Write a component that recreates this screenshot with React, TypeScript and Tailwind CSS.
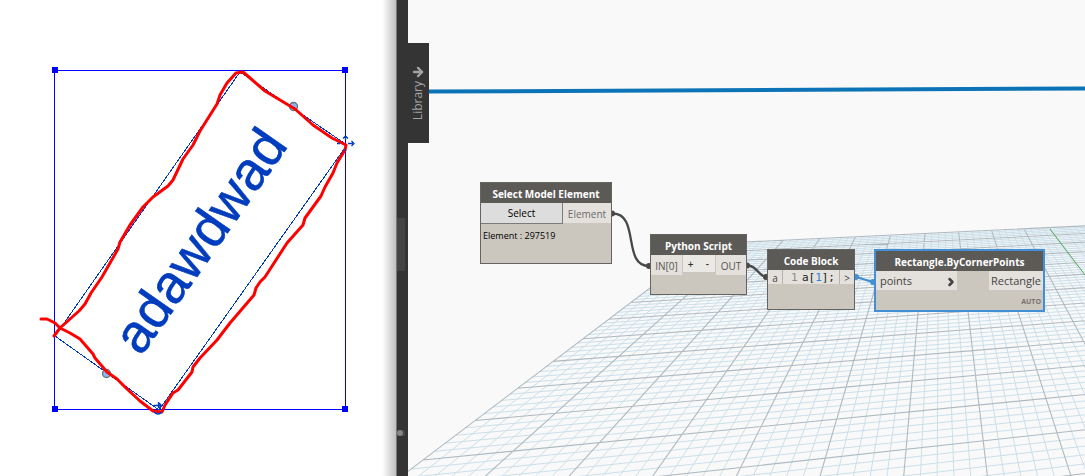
import React from 'react';
import { ArrowRight, ChevronRight } from 'lucide-react';

// Perspective projection of the ground plane: c runs across, r runs away from the viewer
function project(c: number, r: number) {
  const w = 0.02336 * c + 0.1122 * r + 1;
  const x = (102.3 * c + 105.4 * r + 423) / w - 408;
  const y = (1.6 * c + 7.7 * r + 460) / w;
  return `${x.toFixed(1)} ${y.toFixed(1)}`;
}

const MAX_COL = 16;
const MIN_ROW = -4;
const MAX_ROW = 11;

function gridPath(major: boolean) {
  const parts: string[] = [];
  for (let i = 0; i <= MAX_COL * 5; i++) {
    if ((i % 5 === 0) === major && i !== 50) {
      parts.push(`M${project(i / 5, MIN_ROW)}L${project(i / 5, MAX_ROW)}`);
    }
  }
  for (let i = MIN_ROW * 5; i <= MAX_ROW * 5; i++) {
    if ((i % 5 === 0) === major) {
      parts.push(`M${project(0, i / 5)}L${project(MAX_COL, i / 5)}`);
    }
  }
  return parts.join('');
}

const SKETCH =
  'M41 319L47 319L55 323L60 328L70 333L80 339L93 354L95 358L107 372L117 379L127 389L140 401L153 411L162 412L165 405L173 393L178 390L192 372L193 367L200 358L217 340L230 323L254 295L256 288L260 282L265 277L287 243L303 225L305 218L321 196L325 187L333 173L337 163L345 150L346 145L332 138L313 125L295 109L285 103L265 91L250 78L243 72L236 73L227 83L220 95L217 104L200 131L193 145L183 159L173 180L168 186L153 197L143 207L130 225L120 242L118 249L102 277L91 293L85 304L79 311L70 319L60 328L54 336';

function DrawingView() {
  return (
    <section className="relative w-[396px] shrink-0 overflow-hidden bg-white">
      <svg className="block" width="396" height="476" viewBox="0 0 396 476">
        <g fill="none" stroke="#0000ff" shapeRendering="crispEdges">
          <rect x="54.5" y="70.5" width="291" height="339" />
        </g>
        <path
          d="M55 336L240 72L347 145L159 410Z"
          fill="none"
          stroke="#003cbe"
          shapeRendering="crispEdges"
        />
        <g fill="#0000ff">
          <rect x="52" y="67" width="6" height="6" />
          <rect x="342" y="67" width="6" height="6" />
          <rect x="52" y="406" width="6" height="6" />
          <rect x="342" y="406" width="6" height="6" />
        </g>
        <text
          transform="translate(141 357) rotate(-55)"
          fontFamily="Liberation Sans, Arial, sans-serif"
          fontSize="54"
          fill="#003cbe"
          stroke="#003cbe"
          strokeWidth="0.6"
        >
          adawdwad
        </text>
        <g fill="#8cb8f0" stroke="#66727c" strokeWidth="1.3">
          <circle cx="293.5" cy="106.5" r="4" />
          <circle cx="106.5" cy="373.5" r="4" />
        </g>
        <path d={SKETCH} fill="none" stroke="#ff0000" strokeWidth="3" strokeLinejoin="round" strokeLinecap="round" />
        <g fill="none" stroke="#003cbe" strokeWidth="1.3">
          <path d="M348 143.5H353M351.5 141L354 143.5L351.5 146M345.5 140V136M343 138.5L345.5 136L348 138.5M337 143.5H340M345.5 149V151" />
          <path d="M154 405.5H161M158.5 402V408M159 403L161.5 405.5L159 408M154 412Q158 416 162 412" />
        </g>
      </svg>
      <div className="absolute inset-y-0 right-0 w-3.5 bg-gradient-to-r from-transparent to-black/25" />
    </section>
  );
}

function Sidebar() {
  return (
    <div className="flex w-3 shrink-0 flex-col border-l border-[#777] bg-[#343434] pt-[218px]">
      <div className="h-[53px] w-2 bg-[#444]" />
      <div className="mt-[159px] h-1.5 w-2 bg-[#444]">
        <div className="size-1.5 rounded-full bg-[#858585]" />
      </div>
    </div>
  );
}

type NodeProps = {
  title: string;
  className: string;
  children: React.ReactNode;
};

function Node({ title, className, children }: NodeProps) {
  return (
    <article className={`absolute flex flex-col bg-[#cbc6be] ${className}`}>
      <h2 className="flex h-5 shrink-0 items-center justify-center bg-[#5c5a57] pt-0.5 text-[10px] leading-4 font-bold whitespace-nowrap text-white">
        {title}
      </h2>
      {children}
    </article>
  );
}

const PORT = 'flex h-5 items-center justify-center bg-[#e4e0db] pt-0.5 text-[10px] text-[#555]';

export default function App() {
  return (
    <div className="flex min-h-screen overflow-hidden bg-[#f9f9f9] font-['Open_Sans',sans-serif]">
      <DrawingView />
      <Sidebar />

      <main className="relative min-w-0 flex-1 overflow-hidden bg-[#f9f9f9]">
        {/* Ground grid and geometry preview */}
        <svg className="absolute top-0 left-0" width="677" height="476" viewBox="0 0 677 476">
          <path d={gridPath(false)} fill="none" stroke="#cbdfea" />
          <path d={gridPath(true)} fill="none" stroke="#aebac1" strokeWidth="1.1" />
          <path d="M642 229L677 275" stroke="#4aa651" />
          <path d="M21 91.5L677 88.5" stroke="#0c74b6" strokeWidth="4" />
        </svg>

        {/* Wires */}
        <svg className="absolute top-0 left-0" width="677" height="476" viewBox="0 0 677 476" fill="none">
          <g stroke="#484848" strokeWidth="2.3">
            <path d="M205 213.5C232 214 214 266 241 266" />
            <path d="M340 265.5C350 266 350 277 359 277" />
          </g>
          <path d="M447 277C455 278 458 281 466 282" stroke="#448fd3" strokeWidth="2.3" />
          <g fill="#484848">
            <circle cx="204" cy="213.5" r="3" />
            <circle cx="241" cy="266" r="3" />
            <circle cx="339" cy="265.5" r="3" />
            <circle cx="358" cy="277" r="3" />
          </g>
          <circle cx="448" cy="277" r="3" fill="#448fd3" />
          <circle cx="465" cy="282" r="3" fill="#448fd3" />
        </svg>

        <button
          type="button"
          className="absolute top-[43px] left-0 flex h-[100px] w-[21px] flex-col items-center justify-center gap-0.5 bg-[#343434] pr-0.5 text-[12px] leading-4 text-[#a3a3a3]"
        >
          <ArrowRight size={14} strokeWidth={4} />
          <span className="rotate-180 [writing-mode:vertical-rl]">Library</span>
        </button>

        <Node title="Select Model Element" className="top-[182px] left-[72px] h-[82px] w-[132px] border border-[#666461]">
          <div className="flex">
            <button type="button" className="h-[21px] flex-1 border-r border-b border-[#7b7b7b] bg-[#dddddd] text-[10px] text-black">
              Select
            </button>
            <span className="flex h-5 w-12 items-center justify-center bg-[#e4e0db] pt-0.5 text-[10px] text-[#6c6c6c]">
              Element
            </span>
          </div>
          <p className="px-0.5 pt-1 text-[9px] leading-4 text-black">Element : 297519</p>
        </Node>

        <Node title="Python Script" className="top-[234px] left-[242px] h-[61px] w-[97px] border border-[#666461]">
          <div className="flex justify-between">
            <span className={`${PORT} w-[31px]`}>IN[0]</span>
            <button type="button" className="h-[17px] w-4 bg-[#ebe9e6] text-[10px] leading-4 font-semibold text-[#333]">
              +
            </button>
            <button type="button" className="h-[17px] w-4 bg-[#ebe9e6] text-[10px] leading-4 font-semibold text-[#333]">
              -
            </button>
            <span className={`${PORT} w-[30px]`}>OUT</span>
          </div>
        </Node>

        <Node title="Code Block" className="top-[249px] left-[359px] h-[61px] w-[88px] border border-[#666461]">
          <div className="flex h-3.5 bg-[#e4e0db] text-[10px] leading-4 text-[#444]">
            <span className="w-[15px] border-r border-[#b5b1ab] text-center">a</span>
            <code className="flex flex-1 justify-between pr-1 pl-2 font-['DejaVu_Sans_Mono',monospace] text-[11px] leading-4">
              <span className="text-[#8d8a86]">1</span>
              <span className="text-[#222]">
                a[<span className="text-[#2d7fe0]">1</span>];
              </span>
            </code>
            <span className="w-[15px] border-l border-[#b5b1ab] text-center">&gt;</span>
          </div>
        </Node>

        <Node title="Rectangle.ByCornerPoints" className="top-[249px] left-[466px] h-[63px] w-[171px] border-2 border-[#448fd3]">
          <div className="flex justify-between text-[11px] text-[#444]">
            <span className="flex h-[19px] w-[81px] items-center justify-between bg-[#e4e0db] pt-0.5 pl-1">
              points
              <ChevronRight size={12} strokeWidth={5} />
            </span>
            <span className="flex h-[19px] w-[54px] items-center justify-center bg-[#e4e0db] pt-0.5">Rectangle</span>
          </div>
          <span className="mt-auto pr-0.5 pb-1 text-right text-[7px] leading-2 font-bold text-[#77736e]">AUTO</span>
        </Node>
      </main>
    </div>
  );
}
